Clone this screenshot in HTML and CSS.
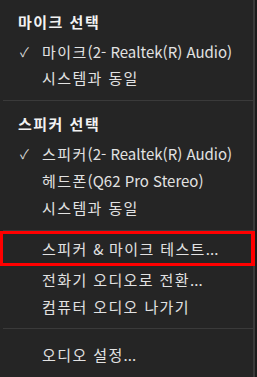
FILE: index.html
```html
<!DOCTYPE html>
<html lang="ko">
<head>
  <meta charset="UTF-8" />
  <meta name="viewport" content="width=device-width, initial-scale=1.0">
  <title>오디오 메뉴</title>
  <link rel="stylesheet" href="styles.css">
</head>
<body>
  <div class="menu">
    <div class="group first">
      <div class="heading">마이크 선택</div>
      <div class="item checked"><span class="check">✓</span>마이크<span class="lat">(2- Realtek(R) Audio)</span></div>
      <div class="item">시스템과 동일</div>
    </div>
    <div class="sep"></div>
    <div class="group">
      <div class="heading">스피커 선택</div>
      <div class="item checked"><span class="check">✓</span>스피커<span class="lat">(2- Realtek(R) Audio)</span></div>
      <div class="item">헤드폰<span class="lat">(Q62 Pro Stereo)</span></div>
      <div class="item">시스템과 동일</div>
    </div>
    <div class="sep"></div>
    <div class="group actions">
      <div class="item highlight">스피커 <span class="lat">&amp;</span> 마이크 테스트<span class="lat">...</span></div>
      <div class="item">전화기 오디오로 전환<span class="lat">...</span></div>
      <div class="item">컴퓨터 오디오 나가기</div>
    </div>
    <div class="sep"></div>
    <div class="group last">
      <div class="item">오디오 설정<span class="lat">...</span></div>
    </div>
  </div>
</body>
</html>
```

FILE: styles.css
```css
* {
  margin: 0;
  padding: 0;
  box-sizing: border-box;
}

body {
  background-color: #1b1b1b;
  font-family: "Noto Sans CJK KR", "Noto Sans", sans-serif;
  color: #e2e2e2;
  font-size: 15px;
}

.menu {
  width: 255px;
  height: 377px;
  background-color: #252525;
  border-right: 2px solid #3a3a3a;
  display: flex;
  flex-direction: column;
}

.group {
  display: flex;
  flex-direction: column;
  padding: 9px 0 9px;
}

.first {
  padding-top: 8px;
}

.heading {
  font-weight: 700;
  color: #f2f2f2;
  padding-left: 18px;
  height: 28px;
  line-height: 28px;
  margin-bottom: 2px;
  letter-spacing: 1.5px;
}

.first .heading {
  margin-bottom: 3px;
}

.item {
  position: relative;
  padding-left: 42px;
  height: 27px;
  line-height: 27px;
  white-space: nowrap;
  letter-spacing: 1.4px;
}

.lat {
  letter-spacing: 0;
}

.first .item {
  height: 26px;
  line-height: 26px;
}

.check {
  position: absolute;
  left: 20px;
  font-size: 13px;
  letter-spacing: 0;
  color: #d8d8d8;
}

.sep {
  height: 2px;
  margin-left: 3px;
  background-color: #3a3a3a;
}

.actions {
  padding: 1px 0 8px;
}

.highlight {
  border: 3px solid #ff0000;
  border-right-width: 4px;
  height: 35px;
  line-height: 29px;
  padding-left: 39px;
  margin-right: -2px;
}

.last {
  padding-top: 12px;
}
```
